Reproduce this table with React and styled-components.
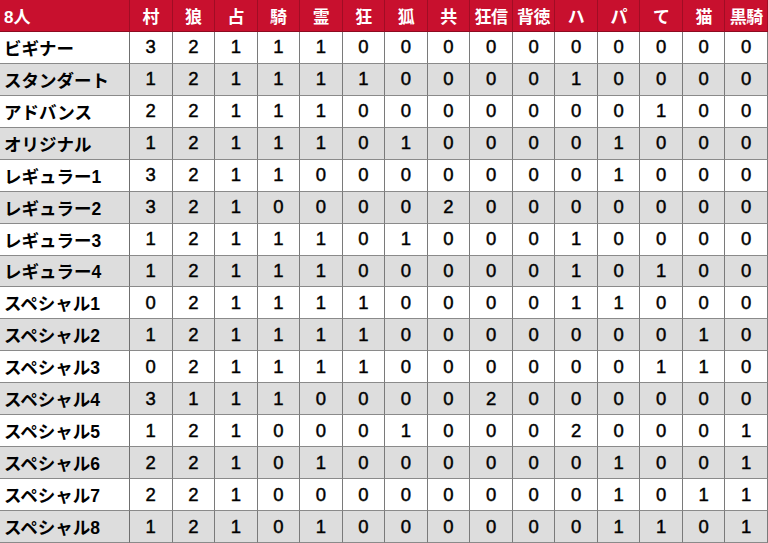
import React from 'react';
import styled, { createGlobalStyle } from 'styled-components';

const GlobalStyle = createGlobalStyle`
  html, body {
    margin: 0;
    padding: 0;
    background: #ffffff;
  }
`;

const Table = styled.div`
  display: grid;
  grid-template-columns: 130px repeat(15, 1fr);
  grid-template-rows: repeat(17, 1fr);
  width: 768px;
  height: 543px;
  font-family: 'Liberation Sans', 'Noto Sans CJK JP', sans-serif;
  color: #000;
  overflow: hidden;
`;

const HeadCell = styled.div`
  display: flex;
  align-items: center;
  justify-content: ${({ first }) => (first ? 'flex-start' : 'center')};
  padding-left: ${({ first }) => (first ? '4px' : '0')};
  background-color: #c8102e;
  color: #ffffff;
  font-weight: bold;
  font-size: 17px;
  letter-spacing: ${({ first }) => (first ? '0' : '-0.5px')};
  border-right: 1px solid #a00d24;
  border-bottom: 1px solid #8d0b20;
  white-space: nowrap;
`;

const LabelCell = styled.div`
  display: flex;
  align-items: center;
  padding-left: 4px;
  background-color: ${({ shaded }) => (shaded ? '#dddddd' : '#ffffff')};
  font-weight: bold;
  font-size: 17.5px;
  border-right: 1px solid #6f6f6f;
  border-bottom: 1px solid #8a8a8a;
  white-space: nowrap;
`;

const Cell = styled.div`
  display: flex;
  align-items: center;
  justify-content: center;
  background-color: ${({ shaded }) => (shaded ? '#dddddd' : '#ffffff')};
  font-size: 18.5px;
  font-weight: normal;
  -webkit-text-stroke: 0.45px #000;
  color: #000;
  border-right: 1px solid #7a7a7a;
  border-bottom: 1px solid #8a8a8a;
`;

const headers = ['村', '狼', '占', '騎', '霊', '狂', '狐', '共', '狂信', '背徳', 'ハ', 'パ', 'て', '猫', '黒騎'];

const rows = [
  ['ビギナー', [3, 2, 1, 1, 1, 0, 0, 0, 0, 0, 0, 0, 0, 0, 0]],
  ['スタンダート', [1, 2, 1, 1, 1, 1, 0, 0, 0, 0, 1, 0, 0, 0, 0]],
  ['アドバンス', [2, 2, 1, 1, 1, 0, 0, 0, 0, 0, 0, 0, 1, 0, 0]],
  ['オリジナル', [1, 2, 1, 1, 1, 0, 1, 0, 0, 0, 0, 1, 0, 0, 0]],
  ['レギュラー1', [3, 2, 1, 1, 0, 0, 0, 0, 0, 0, 0, 1, 0, 0, 0]],
  ['レギュラー2', [3, 2, 1, 0, 0, 0, 0, 2, 0, 0, 0, 0, 0, 0, 0]],
  ['レギュラー3', [1, 2, 1, 1, 1, 0, 1, 0, 0, 0, 1, 0, 0, 0, 0]],
  ['レギュラー4', [1, 2, 1, 1, 1, 0, 0, 0, 0, 0, 1, 0, 1, 0, 0]],
  ['スペシャル1', [0, 2, 1, 1, 1, 1, 0, 0, 0, 0, 1, 1, 0, 0, 0]],
  ['スペシャル2', [1, 2, 1, 1, 1, 1, 0, 0, 0, 0, 0, 0, 0, 1, 0]],
  ['スペシャル3', [0, 2, 1, 1, 1, 1, 0, 0, 0, 0, 0, 0, 1, 1, 0]],
  ['スペシャル4', [3, 1, 1, 1, 0, 0, 0, 0, 2, 0, 0, 0, 0, 0, 0]],
  ['スペシャル5', [1, 2, 1, 0, 0, 0, 1, 0, 0, 0, 2, 0, 0, 0, 1]],
  ['スペシャル6', [2, 2, 1, 0, 1, 0, 0, 0, 0, 0, 0, 1, 0, 0, 1]],
  ['スペシャル7', [2, 2, 1, 0, 0, 0, 0, 0, 0, 0, 0, 1, 0, 1, 1]],
  ['スペシャル8', [1, 2, 1, 0, 1, 0, 0, 0, 0, 0, 0, 1, 1, 0, 1]],
];

const App = () => {
  return (
    <>
      <GlobalStyle />
      <Table>
        <HeadCell first>8人</HeadCell>
        {headers.map((h) => (
          <HeadCell key={h}>{h}</HeadCell>
        ))}
        {rows.map(([name, values], r) => (
          <React.Fragment key={name}>
            <LabelCell shaded={r % 2 === 1}>{name}</LabelCell>
            {values.map((v, i) => (
              <Cell key={i} shaded={r % 2 === 1}>
                {v}
              </Cell>
            ))}
          </React.Fragment>
        ))}
      </Table>
    </>
  );
};

export default App;
